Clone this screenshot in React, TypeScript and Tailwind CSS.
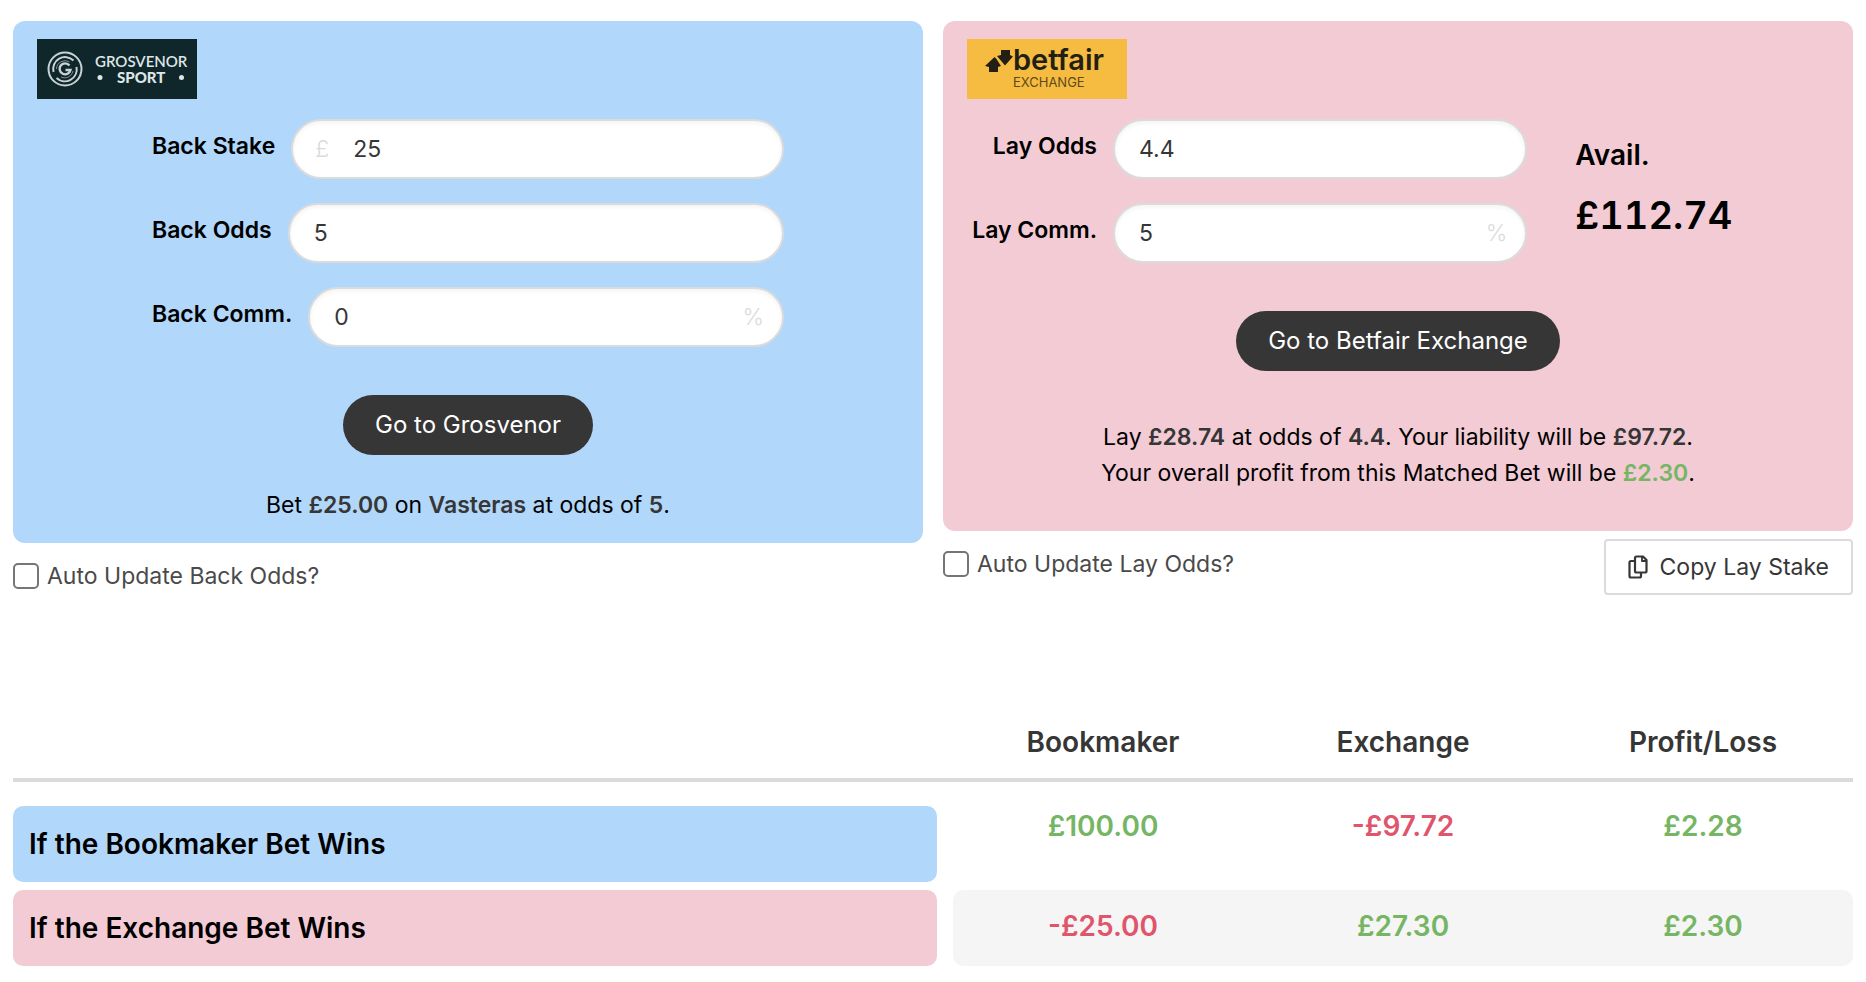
import { useState } from "react";
import { clsx } from "clsx";

type FieldProps = {
  id: string;
  label: string;
  value: string;
  onChange: (value: string) => void;
  prefix?: string;
  suffix?: string;
  alignLabel?: boolean;
};

function Field({ id, label, value, onChange, prefix, suffix, alignLabel }: FieldProps) {
  return (
    <div className="flex items-start gap-4">
      <label
        htmlFor={id}
        className={clsx(
          "shrink-0 whitespace-nowrap pt-[11px] text-[23px] leading-8 font-semibold text-black",
          alignLabel && "w-[130px] text-right",
        )}
      >
        {label}
      </label>
      <div className="relative min-w-0 flex-1">
        {prefix && (
          <span className="pointer-events-none absolute inset-y-0 left-6 flex items-center text-[23px] font-light text-[#dbdbdb]">
            {prefix}
          </span>
        )}
        <input
          id={id}
          type="text"
          inputMode="decimal"
          value={value}
          onChange={(e) => onChange(e.target.value)}
          className={clsx(
            "h-15 w-full rounded-full border-2 border-[#dbdbdb] bg-white pr-14 text-[23px] text-[#363636]",
            "shadow-[inset_0_2px_4px_rgba(10,10,10,0.05)] outline-none focus:border-[#485fc7]",
            prefix ? "pl-[60px]" : "pl-6",
          )}
        />
        {suffix && (
          <span className="pointer-events-none absolute inset-y-0 right-5 flex items-center text-[23px] font-light text-[#dbdbdb]">
            {suffix}
          </span>
        )}
      </div>
    </div>
  );
}

function GrosvenorLogo() {
  return (
    <svg width="160" height="60" viewBox="0 0 160 60" role="img" aria-label="Grosvenor Sport">
      <rect width="160" height="60" fill="#0f262b" />
      <g fill="none" stroke="#c9d3d5">
        <circle cx="28" cy="30" r="16.5" strokeWidth="2" />
        <path d="M16.5 33a12 12 0 0 1 20-11.5M39.5 28a12 12 0 0 1-20 11" strokeWidth="2" />
        <path d="M19.5 30a8.5 8.5 0 0 1 13-7M36 32a8.5 8.5 0 0 1-12 6" strokeWidth="1" opacity="0.6" />
        <path d="M32.5 26.5a5.5 5.5 0 1 0 1 4.5h-5" strokeWidth="2.4" />
      </g>
      <g fill="#dfe6e7" fontFamily="Lato, sans-serif" fontSize="15">
        <text x="58" y="28" fontWeight="600">
          GROSVENOR
        </text>
        <text x="80" y="44" fontWeight="900">
          SPORT
        </text>
      </g>
      <circle cx="63" cy="38.5" r="2.5" fill="#dfe6e7" />
      <circle cx="144.5" cy="38.5" r="2.5" fill="#dfe6e7" />
    </svg>
  );
}

function BetfairLogo() {
  return (
    <svg width="160" height="60" viewBox="0 0 160 60" role="img" aria-label="Betfair Exchange">
      <rect width="160" height="60" fill="#f5bc41" />
      <g fill="#231f14">
        <path d="M18 27l9.500-9 2 2 4.500 7-3 1v5H22v-5z" />
        <path d="M34 11h9v5l3 1.500-8 9-8-9.500 4-1z" />
        <text x="46" y="31" fontFamily="Inter, sans-serif" fontSize="29" fontWeight="600">
          betfair
        </text>
      </g>
      <text x="46" y="48" fill="#5d4a1a" fontFamily="Inter, sans-serif" fontSize="13">
        EXCHANGE
      </text>
    </svg>
  );
}

function CopyIcon() {
  return (
    <svg
      width="20"
      height="24"
      viewBox="0 0 20 24"
      fill="none"
      stroke="currentColor"
      strokeWidth="2.2"
      strokeLinejoin="round"
      aria-hidden="true"
    >
      <path d="M8.5 1.5H15L18.5 5v11a1.5 1.5 0 0 1-1.5 1.5H8.5A1.5 1.5 0 0 1 7 16V3a1.5 1.5 0 0 1 1.5-1.5z" />
      <path d="M14 1.5V6h4.5" strokeWidth="1.8" />
      <path d="M7 6H3a1.5 1.5 0 0 0-1.5 1.5V21A1.5 1.5 0 0 0 3 22.5h8.5A1.5 1.5 0 0 0 13 21v-3.5" />
    </svg>
  );
}

function AutoUpdate({ id, label }: { id: string; label: string }) {
  return (
    <div className="mt-5 flex items-center gap-2">
      <input
        id={id}
        type="checkbox"
        className="size-[26px] appearance-none rounded-[5px] border-2 border-[#767676] bg-white checked:bg-[#485fc7]"
      />
      <label htmlFor={id} className="text-[23px] leading-[26px] text-[#4a4a4a]">
        {label}
      </label>
    </div>
  );
}

const BUTTON = "h-15 rounded-full bg-[#363636] px-8 text-[24px] text-white hover:bg-[#2f2f2f]";

function Amount({ value }: { value: number }) {
  return (
    <span className={value < 0 ? "text-[#e0546c]" : "text-[#75b563]"}>
      {value < 0 ? "-" : ""}£{Math.abs(value).toFixed(2)}
    </span>
  );
}

const bookmakerWins = [100, -97.72, 2.28];
const exchangeWins = [-25, 27.3, 2.3];

export default function App() {
  const [backStake, setBackStake] = useState("25");
  const [backOdds, setBackOdds] = useState("5");
  const [backComm, setBackComm] = useState("0");
  const [layOdds, setLayOdds] = useState("4.4");
  const [layComm, setLayComm] = useState("5");

  return (
    <main className="min-h-screen bg-white px-[13px] pt-[21px] pb-2 font-['Inter',sans-serif]">
      <div className="grid grid-cols-2 items-start gap-5">
        {/* Back bet */}
        <section>
          <div className="rounded-[12px] bg-[#b1d7fb] px-6 pt-[18px] pb-5">
            <GrosvenorLogo />
            <div className="mx-auto mt-5 flex w-[632px] max-w-full flex-col gap-6">
              <Field id="back-stake" label="Back Stake" value={backStake} onChange={setBackStake} prefix="£" />
              <Field id="back-odds" label="Back Odds" value={backOdds} onChange={setBackOdds} />
              <Field id="back-comm" label="Back Comm." value={backComm} onChange={setBackComm} suffix="%" />
            </div>
            <div className="mt-12 text-center">
              <button type="button" className={BUTTON}>
                Go to Grosvenor
              </button>
            </div>
            <p className="mt-8 text-center text-[23px] leading-9 text-black">
              Bet <strong className="font-semibold text-[#363636]">£25.00</strong> on{" "}
              <strong className="font-semibold text-[#363636]">Vasteras</strong> at odds of{" "}
              <strong className="font-semibold text-[#363636]">5</strong>.
            </p>
          </div>
          <AutoUpdate id="auto-back" label="Auto Update Back Odds?" />
        </section>

        {/* Lay bet */}
        <section>
          <div className="rounded-[12px] bg-[#f3cbd4] px-6 pt-[18px] pb-10">
            <BetfairLogo />
            <div className="mt-5 flex">
              <div className="flex w-[65%] flex-col gap-6">
                <Field id="lay-odds" label="Lay Odds" value={layOdds} onChange={setLayOdds} alignLabel />
                <Field id="lay-comm" label="Lay Comm." value={layComm} onChange={setLayComm} suffix="%" alignLabel />
              </div>
              <div className="pt-4 pl-12 font-semibold text-black">
                <p className="text-[28px] leading-10">Avail.</p>
                <p className="mt-5 text-[38px] leading-10 tabular-nums">£112.74</p>
              </div>
            </div>
            <div className="mt-12 text-center">
              <button type="button" className={BUTTON}>
                Go to Betfair Exchange
              </button>
            </div>
            <p className="mt-12 text-center text-[23px] leading-9 text-black">
              Lay <strong className="font-semibold text-[#363636]">£28.74</strong> at odds of{" "}
              <strong className="font-semibold text-[#363636]">4.4</strong>. Your liability will be{" "}
              <strong className="font-semibold text-[#363636]">£97.72</strong>.
              <br />
              Your overall profit from this Matched Bet will be{" "}
              <strong className="font-semibold text-[#75b563]">£2.30</strong>.
            </p>
          </div>
          <div className="flex items-start justify-between">
            <AutoUpdate id="auto-lay" label="Auto Update Lay Odds?" />
            <button
              type="button"
              className="mt-2 flex h-14 items-center gap-3 rounded border-2 border-[#dbdbdb] bg-white px-[22px] text-[23px] text-[#363636] hover:border-[#b5b5b5]"
            >
              <CopyIcon />
              Copy Lay Stake
            </button>
          </div>
        </section>
      </div>

      {/* Outcomes */}
      <table className="mt-[119px] w-full border-separate border-spacing-x-0 border-spacing-y-2 text-[28px] leading-10 font-semibold">
        <thead>
          <tr className="text-[#363636]">
            <td className="border-b-4 border-[#dbdbdb]" />
            {["Bookmaker", "Exchange", "Profit/Loss"].map((heading) => (
              <th key={heading} scope="col" className="w-[300px] border-b-4 border-[#dbdbdb] pb-4 font-semibold">
                {heading}
              </th>
            ))}
          </tr>
        </thead>
        <tbody className="before:block before:h-2">
          <tr>
            <th scope="row" className="pr-4 text-left font-semibold text-black">
              <div className="rounded-[10px] bg-[#b1d7fb] px-4 py-[18px]">If the Bookmaker Bet Wins</div>
            </th>
            {bookmakerWins.map((value) => (
              <td key={value} className="text-center align-top">
                <Amount value={value} />
              </td>
            ))}
          </tr>
          <tr>
            <th scope="row" className="pr-4 text-left font-semibold text-black">
              <div className="rounded-[10px] bg-[#f3cbd4] px-4 py-[18px]">If the Exchange Bet Wins</div>
            </th>
            {exchangeWins.map((value) => (
              <td
                key={value}
                className="bg-[#f5f5f5] pt-4 text-center align-top first-of-type:rounded-l-[10px] last:rounded-r-[10px]"
              >
                <Amount value={value} />
              </td>
            ))}
          </tr>
        </tbody>
      </table>
    </main>
  );
}
